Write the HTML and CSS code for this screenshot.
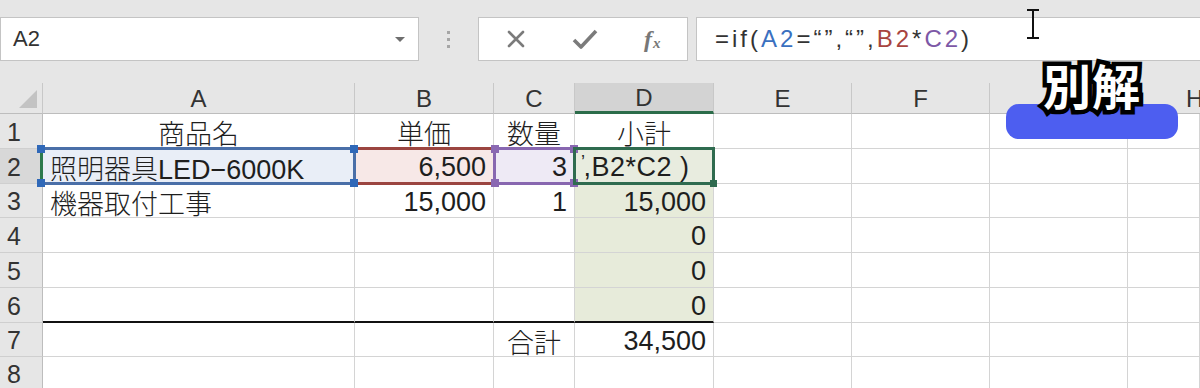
FILE: index.html
```html
<!DOCTYPE html>
<html lang="ja">
<head>
<meta charset="utf-8">
<title>Excel</title>
<link rel="stylesheet" href="styles.css">
</head>
<body>
<div class="app">
  <div class="top-strip"></div>
  <div class="fbar">
    <div class="namebox">
      <span class="nb-text">A2</span>
      <span class="nb-arrow"></span>
    </div>
    <div class="grip"><i></i><i></i><i></i></div>
    <div class="fbuttons">
      <svg class="ic ic-x" width="20" height="20" viewBox="0 0 20 20"><path d="M3 3 L17 17 M17 3 L3 17" stroke="#7b7b7b" stroke-width="2.6" stroke-linecap="round"/></svg>
      <svg class="ic ic-ok" width="26" height="22" viewBox="0 0 26 22"><path d="M2 12 L9 19 L24 3" fill="none" stroke="#7b7b7b" stroke-width="3.6" stroke-linejoin="round"/></svg>
      <span class="fx"><i>f</i><sub>x</sub></span>
    </div>
    <div class="finput">
      <span class="ftext">=if(<span class="c-blue">A2</span>=“”,“”,<span class="c-red">B2</span>*<span class="c-purple">C2</span>)</span>
    </div>
  </div>
  <div class="mid-strip"></div>
  <div class="sheet">
    <div class="ch corner"><span class="tri"></span></div>
    <div class="ch">A</div>
    <div class="ch">B</div>
    <div class="ch">C</div>
    <div class="ch ch-sel">D</div>
    <div class="ch">E</div>
    <div class="ch">F</div>
    <div class="ch">G</div>
    <div class="ch ch-h">H</div>

    <div class="rh">1</div>
    <div class="c center">商品名</div>
    <div class="c center">単価</div>
    <div class="c center">数量</div>
    <div class="c center">小計</div>
    <div class="c"></div><div class="c"></div><div class="c"></div><div class="c"></div>

    <div class="rh rh-sel">2</div>
    <div class="c ref ref-blue">照明器具LED−6000K<span class="hl"><i class="h tl"></i><i class="h tr"></i><i class="h bl"></i><i class="h br"></i></span></div>
    <div class="c right ref ref-red">6,500<span class="hl"></span></div>
    <div class="c right ref ref-purple">3<span class="hl"><i class="h tl"></i><i class="h tr"></i><i class="h bl"></i><i class="h br"></i></span></div>
    <div class="c edit"><span class="etext"><span class="tick">’</span>,B2*C2 )</span><span class="hl"><i class="h br"></i></span></div>
    <div class="c"></div><div class="c"></div><div class="c"></div><div class="c"></div>

    <div class="rh">3</div>
    <div class="c">機器取付工事</div>
    <div class="c right">15,000</div>
    <div class="c right">1</div>
    <div class="c right calc">15,000</div>
    <div class="c"></div><div class="c"></div><div class="c"></div><div class="c"></div>

    <div class="rh">4</div>
    <div class="c"></div><div class="c"></div><div class="c"></div>
    <div class="c right calc">0</div>
    <div class="c"></div><div class="c"></div><div class="c"></div><div class="c"></div>

    <div class="rh">5</div>
    <div class="c"></div><div class="c"></div><div class="c"></div>
    <div class="c right calc">0</div>
    <div class="c"></div><div class="c"></div><div class="c"></div><div class="c"></div>

    <div class="rh">6</div>
    <div class="c thick"></div><div class="c thick"></div><div class="c thick"></div>
    <div class="c right calc thick">0</div>
    <div class="c"></div><div class="c"></div><div class="c"></div><div class="c"></div>

    <div class="rh">7</div>
    <div class="c"></div><div class="c"></div>
    <div class="c center">合計</div>
    <div class="c right">34,500</div>
    <div class="c"></div><div class="c"></div><div class="c"></div><div class="c"></div>

    <div class="rh">8</div>
    <div class="c"></div><div class="c"></div><div class="c"></div><div class="c"></div>
    <div class="c"></div><div class="c"></div><div class="c"></div><div class="c"></div>
  </div>

  <svg class="ibeam" width="16" height="32" viewBox="0 0 16 32"><path d="M2 2 H14 M8 2 V30 M2 30 H14" stroke="#111" stroke-width="2" fill="none"/></svg>
  <div class="badge">
    <span class="pill"></span>
    <span class="badge-text">別解</span>
  </div>
</div>
</body>
</html>
```

FILE: styles.css
```css
* { box-sizing: border-box; }
html, body { margin: 0; padding: 0; }
body {
  width: 1200px;
  height: 388px;
  overflow: hidden;
  background: #e6e6e6;
  font-family: "Liberation Sans", "Noto Sans CJK JP", sans-serif;
  color: #222;
}
.app { position: relative; width: 1200px; height: 388px; overflow: hidden; }

.top-strip { height: 17px; }
.fbar { display: flex; height: 44px; }
.namebox {
  width: 419px;
  background: #fff;
  border: 1px solid #c4c4c4;
  display: flex;
  align-items: center;
  justify-content: space-between;
  padding: 0 12px 0 12px;
}
.nb-text { font-size: 22px; color: #333; }
.nb-arrow {
  width: 0; height: 0;
  border-left: 5px solid transparent;
  border-right: 5px solid transparent;
  border-top: 5px solid #6e6e6e;
  margin-right: 1px;
}
.grip {
  width: 59px;
  display: flex;
  flex-direction: column;
  align-items: center;
  justify-content: center;
  gap: 4px;
}
.grip i { width: 3px; height: 3px; background: #a6a6a6; display: block; }
.fbuttons {
  width: 210px;
  background: #fff;
  border: 1px solid #c4c4c4;
  display: flex;
  align-items: center;
  padding-left: 27px;
}
.ic-x { margin-right: 46px; }
.ic-ok { margin-right: 46px; }
.fx {
  font-family: "Liberation Serif", serif;
  font-style: italic;
  font-weight: bold;
  color: #777;
  font-size: 24px;
  line-height: 1;
}
.fx sub { font-size: 15px; vertical-align: -1px; margin-left: 1px; }
.finput {
  flex: 1;
  margin-left: 8px;
  background: #fff;
  border: 1px solid #c4c4c4;
  border-right: none;
  display: flex;
  align-items: center;
  padding-left: 18px;
}
.ftext { font-size: 24px; color: #333; letter-spacing: 3px; }
.c-blue { color: #3a70bf; }
.c-red { color: #a8443f; }
.c-purple { color: #7d58a6; }

.mid-strip { height: 22px; }

.sheet {
  display: grid;
  grid-template-columns: 43px 312px 139px 81px 139px 138px 138px 138px 72px;
  grid-template-rows: 31px 35px 35px 34px 35px 35px 35px 34px 34px;
  background: #fff;
}
.ch {
  background: #e6e6e6;
  border-right: 1px solid #c8c8c8;
  border-bottom: 1px solid #bdbdbd;
  display: flex;
  align-items: center;
  justify-content: center;
  font-size: 24px;
  color: #333;
  padding-top: 2px;
}
.ch-sel { background: #d3d3d3; border-bottom: 3px solid #2c6c4a; }
.ch-h { justify-content: flex-start; padding-left: 58px; border-right: none; }
.corner { justify-content: flex-end; align-items: flex-end; padding: 0 5px 5px 0; }
.tri {
  width: 18px; height: 18px;
  background: #c3c3c3;
  clip-path: polygon(100% 0, 100% 100%, 0 100%);
}
.rh {
  background: #e6e6e6;
  border-right: 1px solid #bdbdbd;
  border-bottom: 1px solid #cfcfcf;
  font-size: 25px;
  color: #333;
  display: flex;
  align-items: center;
  padding-left: 7px;
  padding-top: 2px;
}
.rh-sel { background: #d8d8d8; border-right: 3px solid #2c7a4e; }
.c {
  border-right: 1px solid #d4d4d4;
  border-bottom: 1px solid #d4d4d4;
  font-size: 27px;
  font-weight: 300;
  color: #1e1e1e;
  display: flex;
  align-items: center;
  padding: 3px 7px 0 7px;
  white-space: nowrap;
  position: relative;
}
.center { justify-content: center; }
.right { justify-content: flex-end; }
.calc { background: #e7ebda; }
.thick { border-bottom: 2px solid #111; }

.ref .hl {
  position: absolute;
  top: -2px; left: -1px; right: -2px; bottom: -2px;
  border: 3px solid;
  pointer-events: none;
}
.ref-blue { background: #e9eef7; }
.ref-blue .hl { border-color: #4a6fa8; border-left: none; left: 0; z-index: 2; }
.ref-blue .h { background: #2f68b8; }
.ref-blue .h.tl, .ref-blue .h.bl { left: -6px; }
.ref-red { background: #f7e8e7; }
.ref-red .hl { border-color: #9b4540; border-left: none; border-right: none; z-index: 1; }
.ref-purple { background: #eeeaf5; }
.ref-purple .hl { border-color: #8867b0; z-index: 2; }
.ref-purple .h { background: #8a68b2; }
.h { position: absolute; width: 8px; height: 8px; display: block; }
.h.tl { top: -5px; left: -5px; }
.h.tr { top: -5px; right: -5px; }
.h.bl { bottom: -5px; left: -5px; }
.h.br { bottom: -5px; right: -5px; }

.edit {
  background: #e8ecdf;
  justify-content: flex-start;
  padding-left: 6px;
}
.etext { display: block; letter-spacing: 0.5px; }
.tick { font-size: 18px; vertical-align: 8px; margin-right: -2px; }
.edit .hl {
  position: absolute;
  top: -2px; left: -2px; right: -2px; bottom: -2px;
  border: 3px solid #2f6b4f;
  z-index: 3;
}
.edit .h { background: #2f6b4f; width: 7px; height: 7px; bottom: -5px; right: -5px; }

.ibeam { position: absolute; left: 1025px; top: 8px; }

.badge { position: absolute; left: 1006px; top: 60px; width: 172px; height: 80px; }
.pill {
  position: absolute;
  left: 0; top: 44px;
  width: 172px; height: 35px;
  border-radius: 13px;
  background: #4d5ef0;
}
.badge-text {
  position: absolute;
  left: 0; right: 0; top: -4px;
  text-align: center;
  font-family: "Noto Sans CJK JP", sans-serif;
  font-weight: 700;
  font-size: 48px;
  line-height: 1.2;
  color: #fff;
  letter-spacing: 1px;
  -webkit-text-stroke: 9px #000;
  paint-order: stroke fill;
}
```
